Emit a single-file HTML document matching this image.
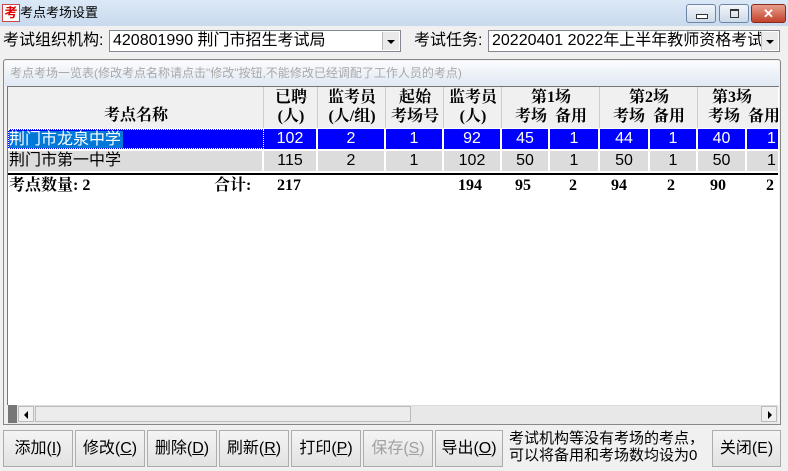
<!DOCTYPE html>
<html><head><meta charset="utf-8"><style>
body{margin:0;width:788px;height:471px;overflow:hidden;background:#f0f0f0;font-family:"Liberation Sans","Noto Sans CJK SC",sans-serif;position:relative}
.a{position:absolute;white-space:nowrap}
.title{left:0;top:0;width:788px;height:26px;background:linear-gradient(#dbe8f6,#c9daee);}
.wb{top:4px;height:17px;border:1px solid #6d86a8;border-radius:3px;background:linear-gradient(#f2f6fb,#cdd9e8)}
.lbl{font-size:16px;color:#000;line-height:22px}
.combo{background:#fff;border:1px solid #828790;height:22px;font-size:16px;line-height:20px;padding-left:3px;box-sizing:border-box}
.dd{position:absolute;right:1px;top:1px;width:16px;height:18px;background:#eaeaea;border-left:1px solid #bbb}
.dd:after{content:"";position:absolute;left:4px;top:8px;border:4px solid transparent;border-top:4px solid #000}
.c{position:absolute;box-sizing:border-box;text-align:center;font-size:16px;height:20px;line-height:19px;border-right:2px solid #fff;overflow:hidden;white-space:nowrap}
.h{font-family:"Liberation Serif","Noto Serif CJK SC",serif;font-weight:bold;font-size:16px;text-align:center;line-height:19px;position:absolute;white-space:nowrap}
.btn{position:absolute;top:430px;height:37px;border:1px solid #acacac;background:linear-gradient(#f4f4f4,#e2e2e2);box-sizing:border-box;font-size:16px;line-height:35px;text-align:center}
.tot{font-family:"Liberation Serif","Noto Serif CJK SC",serif;font-weight:bold;font-size:16px;position:absolute;top:176px;line-height:20px;height:20px}
</style></head><body>
<div class="a title"></div>
<div class="a" style="left:2px;top:4px;width:16px;height:16px;background:#fff;border:1px solid #c44;color:#d00;font-size:13px;line-height:16px;text-align:center;font-weight:bold">考</div>
<div class="a" style="left:20px;top:4px;font-size:13px;line-height:17px">考点考场设置</div>
<div class="a wb" style="left:686px;width:28px"><div style="position:absolute;left:9px;top:9px;width:10px;height:3px;border:1px solid #333;background:#fff"></div></div>
<div class="a wb" style="left:719px;width:28px"><div style="position:absolute;left:10px;top:4px;width:7px;height:6px;border:1px solid #333;border-top-width:2px"></div></div>
<div class="a" style="left:751px;top:4px;width:33px;height:17px;border:1px solid #8a2a1e;border-radius:3px;background:linear-gradient(#e79f8d,#c3432b);color:#fff;font-weight:bold;font-size:13px;text-align:center;line-height:17px">✕</div>

<div class="a lbl" style="left:3px;top:30px">考试组织机构:</div>
<div class="a combo" style="left:109px;top:30px;width:292px">420801990 荆门市招生考试局<div class="dd"></div></div>
<div class="a lbl" style="left:414px;top:30px">考试任务:</div>
<div class="a combo" style="left:488px;top:30px;width:292px;overflow:hidden">20220401 2022年上半年教师资格考试<div class="dd"></div></div>

<div class="a" style="left:3px;top:59px;width:778px;height:366px;border:1px solid #888;background:#f0f0f0;box-sizing:border-box;border-radius:3px 3px 0 0"></div>
<div class="a" style="left:5px;top:61px;width:774px;height:25px;background:linear-gradient(#fbfcfe,#dfe8f3)"></div>
<div class="a" style="left:10px;top:64px;font-size:12px;line-height:18px;color:#a8a8a8">考点考场一览表(修改考点名称请点击"修改"按钮,不能修改已经调配了工作人员的考点)</div>
<div class="a" style="left:7px;top:86px;width:771px;height:318px;background:#fff;border-left:1px solid #777;border-top:1px solid #777"></div>
<div class="a" style="left:8px;top:87px;width:770px;height:41px;background:#f0f0f0"></div>
<div class="h" style="left:8px;top:106px;width:256px">考点名称</div>
<div class="h" style="left:264px;top:88px;width:54px">已聘<br>(人)</div>
<div class="h" style="left:318px;top:88px;width:68px">监考员<br>(人/组)</div>
<div class="h" style="left:386px;top:88px;width:58px">起始<br>考场号</div>
<div class="h" style="left:444px;top:88px;width:58px">监考员<br>(人)</div>
<div class="h" style="left:502px;top:88px;width:98px">第1场<br>考场&nbsp;&nbsp;备用</div>
<div class="h" style="left:600px;top:88px;width:98px">第2场<br>考场&nbsp;&nbsp;备用</div>
<div class="h" style="left:698px;top:88px;width:80px;overflow:hidden;text-align:left;padding-left:10px;box-sizing:border-box">&nbsp;第3场<br>考场&nbsp;&nbsp;备用</div>
<div class="a" style="left:263px;top:87px;width:1px;height:41px;background:#ccc"></div>
<div class="a" style="left:317px;top:87px;width:1px;height:41px;background:#ccc"></div>
<div class="a" style="left:385px;top:87px;width:1px;height:41px;background:#ccc"></div>
<div class="a" style="left:443px;top:87px;width:1px;height:41px;background:#ccc"></div>
<div class="a" style="left:501px;top:87px;width:1px;height:41px;background:#ccc"></div>
<div class="a" style="left:599px;top:87px;width:1px;height:41px;background:#ccc"></div>
<div class="a" style="left:697px;top:87px;width:1px;height:41px;background:#ccc"></div>
<div style="position:absolute;left:0;top:0;color:#fff">
<div class="c" style="left:8px;top:129px;width:256px;background:#0000ff;text-align:left;border:1px dotted #fff"><span style="background:#0078d7;display:inline-block;height:18px;line-height:17px;padding-right:2px">荆门市龙泉中学</span></div>
<div class="c" style="left:264px;top:129px;width:54px;background:#00f">102</div>
<div class="c" style="left:318px;top:129px;width:68px;background:#00f">2</div>
<div class="c" style="left:386px;top:129px;width:58px;background:#00f">1</div>
<div class="c" style="left:444px;top:129px;width:58px;background:#00f">92</div>
<div class="c" style="left:502px;top:129px;width:48px;background:#00f">45</div>
<div class="c" style="left:550px;top:129px;width:50px;background:#00f">1</div>
<div class="c" style="left:600px;top:129px;width:50px;background:#00f">44</div>
<div class="c" style="left:650px;top:129px;width:48px;background:#00f">1</div>
<div class="c" style="left:698px;top:129px;width:49px;background:#00f">40</div>
<div class="c" style="left:747px;top:129px;width:31px;background:#00f;text-align:left;padding-left:20px;border:0">1</div>
</div>
<div style="position:absolute;left:0;top:22px;color:#000">
<div class="c" style="left:8px;top:129px;width:256px;background:#dcdcdc;text-align:left;padding-left:1px">荆门市第一中学</div>
<div class="c" style="left:264px;top:129px;width:54px;background:#dcdcdc">115</div>
<div class="c" style="left:318px;top:129px;width:68px;background:#dcdcdc">2</div>
<div class="c" style="left:386px;top:129px;width:58px;background:#dcdcdc">1</div>
<div class="c" style="left:444px;top:129px;width:58px;background:#dcdcdc">102</div>
<div class="c" style="left:502px;top:129px;width:48px;background:#dcdcdc">50</div>
<div class="c" style="left:550px;top:129px;width:50px;background:#dcdcdc">1</div>
<div class="c" style="left:600px;top:129px;width:50px;background:#dcdcdc">50</div>
<div class="c" style="left:650px;top:129px;width:48px;background:#dcdcdc">1</div>
<div class="c" style="left:698px;top:129px;width:49px;background:#dcdcdc">50</div>
<div class="c" style="left:747px;top:129px;width:31px;background:#dcdcdc;text-align:left;padding-left:20px;border:0">1</div>
</div>
<div class="a" style="left:8px;top:173px;width:770px;height:2px;background:#000"></div>
<div class="tot" style="left:9px">考点数量: 2</div>
<div class="tot" style="left:214px">合计:</div>
<div class="tot" style="left:277px">217</div>
<div class="tot" style="left:458px">194</div>
<div class="tot" style="left:515px">95</div>
<div class="tot" style="left:569px">2</div>
<div class="tot" style="left:611px">94</div>
<div class="tot" style="left:667px">2</div>
<div class="tot" style="left:710px">90</div>
<div class="tot" style="left:766px">2</div>
<div class="a" style="left:8px;top:405px;width:770px;height:18px;background:#e8e8e8;border-top:1px solid #ddd"></div>
<div class="a" style="left:8px;top:405px;width:9px;height:18px;background:#777"></div>
<div class="a" style="left:18px;top:406px;width:16px;height:16px;background:#f0f0f0;border:1px solid #bbb;box-sizing:border-box"><div style="position:absolute;left:5px;top:4px;border:4px solid transparent;border-right:4px solid #000;border-left:0"></div></div>
<div class="a" style="left:35px;top:406px;width:376px;height:16px;background:#ececec;border:1px solid #bbb;box-sizing:border-box"></div>
<div class="a" style="left:761px;top:406px;width:16px;height:16px;background:#f0f0f0;border:1px solid #bbb;box-sizing:border-box"><div style="position:absolute;left:6px;top:4px;border:4px solid transparent;border-left:4px solid #000;border-right:0"></div></div>
<div class="btn" style="left:3px;width:70px">添加(<u>I</u>)</div>
<div class="btn" style="left:75px;width:70px">修改(<u>C</u>)</div>
<div class="btn" style="left:147px;width:70px">删除(<u>D</u>)</div>
<div class="btn" style="left:219px;width:70px">刷新(<u>R</u>)</div>
<div class="btn" style="left:291px;width:70px">打印(<u>P</u>)</div>
<div class="btn" style="left:363px;width:70px;color:#a0a0a0">保存(<u>S</u>)</div>
<div class="btn" style="left:435px;width:68px">导出(<u>O</u>)</div>
<div class="a" style="left:509px;top:430px;font-size:15px;line-height:17px">考试机构等没有考场的考点，<br>可以将备用和考场数均设为0</div>
<div class="btn" style="left:712px;width:69px">关闭(E)</div>
</body></html>
